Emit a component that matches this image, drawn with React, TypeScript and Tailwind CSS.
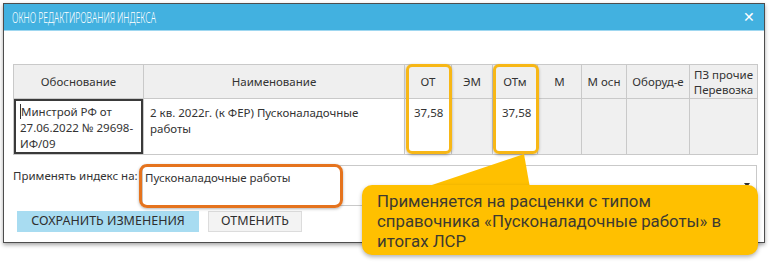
import React from "react";

const cols = [130, 261, 47, 41, 45, 44, 45, 63, 68];

export default function App() {
  const bd = "border border-[#c9c9c9] p-0";
  const th = `${bd} align-middle font-normal text-center whitespace-nowrap`;
  const td = `${bd} align-top`;
  return (
    <div className="relative w-[771px] h-[273px] bg-white overflow-hidden font-['Noto_Sans',sans-serif] text-[#333]">
      {/* Window */}
      <div className="ml-[3px] mt-[3px] w-[762px] h-[240px] border border-[#4d4d4d] bg-white shadow-[0_2px_4px_rgba(0,0,0,0.35)] flex flex-col">
        <div className="h-[27px] bg-[#42b1e0] border-b border-[#9fd7f0] flex items-center justify-between pl-[8px] pr-[9px]">
          <span className="inline-block origin-left scale-x-[0.61] text-white text-[14px] font-light whitespace-nowrap">
            ОКНО РЕДАКТИРОВАНИЯ ИНДЕКСА
          </span>
          <span className="text-white text-[14px] font-light leading-none">✕</span>
        </div>
        <div className="pl-[9px] pt-[33px] flex flex-col">
          {/* Table */}
          <div className="relative w-[744px]">
            <table className="border-collapse table-fixed w-[744px] text-[11.5px] leading-[16px]">
              <colgroup>
                {cols.map((w, i) => (
                  <col key={i} style={{ width: w }} />
                ))}
              </colgroup>
              <thead>
                <tr className="h-[34px] bg-[#efefef]">
                  <th className={th}>Обоснование</th>
                  <th className={th}>Наименование</th>
                  <th className={th}>ОТ</th>
                  <th className={th}>ЭМ</th>
                  <th className={th}>ОТм</th>
                  <th className={th}>М</th>
                  <th className={th}>М осн</th>
                  <th className={th}>Оборуд-е</th>
                  <th className={`${th} leading-[15px]`}>
                    ПЗ прочие
                    <br />
                    Перевозка
                  </th>
                </tr>
              </thead>
              <tbody>
                <tr className="h-[56px]">
                  <td className={`${td} bg-white shadow-[inset_0_0_0_2px_#3a3a3a] pl-[6px] pt-[5px]`}>
                    <span className="border-l border-[#333]">Минстрой РФ от 27.06.2022 № 29698-ИФ/09</span>
                  </td>
                  <td className={`${td} bg-white pl-[6px] pr-[10px] pt-[6px]`}>2 кв. 2022г. (к ФЕР) Пусконаладочные работы</td>
                  <td className={`${td} bg-white pl-[9px] pt-[6px]`}>37,58</td>
                  <td className={`${td} bg-[#f0f0f0]`}></td>
                  <td className={`${td} bg-white pl-[9px] pt-[6px]`}>37,58</td>
                  <td className={`${td} bg-[#f0f0f0]`}></td>
                  <td className={`${td} bg-[#f0f0f0]`}></td>
                  <td className={`${td} bg-[#f0f0f0]`}></td>
                  <td className={`${td} bg-[#f0f0f0]`}></td>
                </tr>
              </tbody>
            </table>
            <div className="absolute left-[393px] top-0 w-[46px] h-[90px] rounded-[6px] border-[3px] border-[#f7b716] shadow-[0_1px_3px_rgba(0,0,0,0.3)]" />
            <div className="absolute left-[480px] top-0 w-[46px] h-[90px] rounded-[6px] border-[3px] border-[#f7b716] shadow-[0_1px_3px_rgba(0,0,0,0.3)]" />
          </div>

          {/* Apply row */}
          <div className="relative mt-[10px] flex items-start w-[744px]">
            <div className="w-[129px] pt-[3px] text-[11.5px] leading-[16px] whitespace-nowrap">Применять индекс на:</div>
            <div className="relative flex-1 h-[41px] border border-[#c9c9c9] bg-white pl-[2px] pt-[4px] text-[11.5px] leading-[16px]">
              Пусконаладочные работы
              <span className="absolute right-[6px] top-[17px] w-0 h-0 border-l-[3px] border-r-[3px] border-t-[4px] border-l-transparent border-r-transparent border-t-[#333]" />
            </div>
            <div className="absolute left-[126px] top-[-1px] w-[204px] h-[44px] rounded-[8px] border-[3px] border-[#e5731d] shadow-[0_1px_3px_rgba(0,0,0,0.3)]" />
          </div>

          {/* Buttons */}
          <div className="mt-[5px] ml-[4px] flex gap-[9px]">
            <div className="w-[182px] h-[21px] bg-[#a8dcf1] flex items-center justify-center text-[12.5px] text-[#2f2f2f] whitespace-nowrap">
              СОХРАНИТЬ ИЗМЕНЕНИЯ
            </div>
            <div className="w-[94px] h-[21px] bg-[#f3f3f3] border border-[#dcdcdc] flex items-center justify-center text-[12.5px] text-[#2f2f2f] whitespace-nowrap">
              ОТМЕНИТЬ
            </div>
          </div>
        </div>
      </div>

      {/* Callout */}
      <svg className="absolute left-0 top-0" width="771" height="273" viewBox="0 0 771 273">
        <polygon points="423,188 524,154 530,188" fill="#ffc000" />
      </svg>
      <div className="absolute left-[362px] top-[185px] w-[396px] h-[70px] rounded-[10px] bg-[#ffc000] shadow-[0_2px_4px_rgba(0,0,0,0.3)] pl-[15px] pt-[6px] font-['Roboto',sans-serif] text-[16.8px] leading-[20px] text-[#3d3a30] whitespace-nowrap">
        Применяется на расценки с типом
        <br />
        справочника «Пусконаладочные работы» в
        <br />
        итогах ЛСР
      </div>
    </div>
  );
}
